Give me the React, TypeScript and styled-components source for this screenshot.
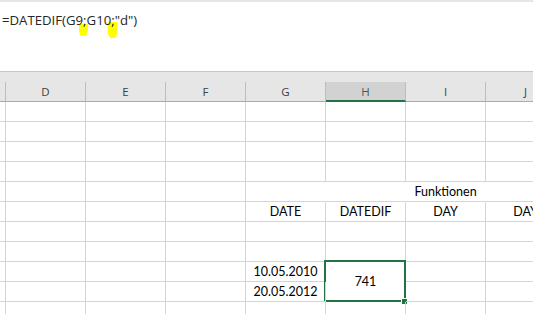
import styled, { createGlobalStyle } from 'styled-components';

type Align = 'left' | 'center' | 'right';

type CellSpec = {
    text?: string;
    align?: Align;
    middle?: boolean;
    noRight?: boolean;
    rowSpan?: number;
    selected?: boolean;
};

const COLUMNS = ['D', 'E', 'F', 'G', 'H', 'I', 'J'];
const SELECTED_COLUMN = 'H';

const empty = (): CellSpec[] => COLUMNS.map(() => ({}));

// one entry per visible sheet row, cells D..J (the stub column is added when rendering)
const ROWS: CellSpec[][] = [
    empty(),
    empty(),
    empty(),
    empty(),
    [{}, {}, {}, { noRight: true }, { noRight: true }, { text: 'Funktionen', noRight: true }, {}],
    [{}, {}, {}, { text: 'DATE' }, { text: 'DATEDIF' }, { text: 'DAY' }, { text: 'DAY' }],
    empty(),
    empty(),
    [{}, {}, {}, { text: '10.05.2010' }, { text: '741', middle: true, rowSpan: 2, selected: true }, {}, {}],
    [{}, {}, {}, { text: '20.05.2012' }, {}, {}],
    empty(),
];

const App = () => {
    return (
        <>
            <GlobalStyle />
            <Window>
                <FormulaBar>
                    <Marks viewBox="0 0 140 45" width="140" height="45">
                        <polygon points="79,24 88,24 88,31 86,36 80.5,36 79,31" />
                        <polygon points="107.5,22 117.5,22 117.5,33 115.5,38 110,38 107.5,33" />
                    </Marks>
                    <FormulaText>=DATEDIF(G9;G10;"d")</FormulaText>
                </FormulaBar>
                <HeaderBand>
                    <HeaderGrid>
                        <HeaderCell />
                        {COLUMNS.map((col) => (
                            <HeaderCell key={col} $selected={col === SELECTED_COLUMN}>
                                {col}
                            </HeaderCell>
                        ))}
                    </HeaderGrid>
                </HeaderBand>
                <Sheet>
                    {ROWS.map((row, r) => [
                        <Cell key={`s${r}`} />,
                        ...row.map((cell, c) => (
                            <Cell
                                key={`${r}-${c}`}
                                $align={cell.align ?? 'center'}
                                $middle={!!cell.middle}
                                $noRight={!!cell.noRight}
                                $rowSpan={cell.rowSpan ?? 1}
                            >
                                {cell.text}
                                {cell.selected && (
                                    <>
                                        <SelectionFrame />
                                        <FillHandle />
                                    </>
                                )}
                            </Cell>
                        )),
                    ])}
                </Sheet>
            </Window>
        </>
    );
};

const GlobalStyle = createGlobalStyle`
    html, body {
        margin: 0;
        padding: 0;
        background: #ffffff;
    }
`;

const Window = styled.div`
    display: flex;
    flex-direction: column;
    width: 533px;
    height: 314px;
    overflow: hidden;
    background: #ffffff;
`;

const FormulaBar = styled.div`
    position: relative;
    flex: none;
    height: 69px;
    border-top: 2px solid #e6e6e6;
    border-bottom: 1px solid #c6c6c6;
`;

const Marks = styled.svg`
    position: absolute;
    top: -2px;
    left: 0;
    fill: #ffff00;
    pointer-events: none;
`;

const FormulaText = styled.div`
    position: relative;
    padding: 9px 0 0 2px;
    font-family: 'Open Sans', 'Noto Sans', sans-serif;
    font-size: 13.2px;
    line-height: 18px;
    color: #262626;
    white-space: nowrap;
`;

const HeaderBand = styled.div`
    flex: none;
    display: flex;
    flex-direction: column;
    justify-content: flex-end;
    height: 30px;
    background: #e6e6e6;
`;

const HeaderGrid = styled.div`
    display: grid;
    grid-template-columns: 6px repeat(7, 80px);
    height: 20px;
`;

const HeaderCell = styled.div<{ $selected?: boolean }>`
    display: flex;
    align-items: center;
    justify-content: center;
    box-sizing: border-box;
    border-right: 1px solid #bdbdbd;
    border-bottom: ${(p) => (p.$selected ? '2px solid #217346' : '1px solid #ababab')};
    background: ${(p) => (p.$selected ? '#d2d2d2' : 'transparent')};
    font-family: 'Open Sans', 'Noto Sans', sans-serif;
    font-size: 11.5px;
    color: ${(p) => (p.$selected ? '#3f5f50' : '#404040')};
`;

const Sheet = styled.div`
    display: grid;
    grid-template-columns: 6px repeat(7, 80px);
    grid-auto-rows: 20px;
`;

const Cell = styled.div<{ $align?: Align; $middle?: boolean; $noRight?: boolean; $rowSpan?: number }>`
    position: relative;
    display: flex;
    justify-content: ${(p) => (p.$align === 'left' ? 'flex-start' : p.$align === 'right' ? 'flex-end' : 'center')};
    align-items: ${(p) => (p.$middle ? 'center' : 'flex-end')};
    grid-row: span ${(p) => p.$rowSpan ?? 1};
    box-sizing: border-box;
    padding-bottom: ${(p) => (p.$middle ? '0' : '2px')};
    border-right: 1px solid ${(p) => (p.$noRight ? 'transparent' : '#d4d4d4')};
    border-bottom: 1px solid #d4d4d4;
    font-family: Lato, 'Open Sans', sans-serif;
    font-size: 12.5px;
    color: #000000;
    white-space: nowrap;
`;

const SelectionFrame = styled.span`
    position: absolute;
    top: -2px;
    left: -2px;
    right: -1px;
    bottom: -1px;
    border: 2px solid #217346;
    pointer-events: none;
`;

const FillHandle = styled.span`
    position: absolute;
    right: -2px;
    bottom: -3px;
    width: 5px;
    height: 5px;
    background: #217346;
    box-shadow: 0 0 0 1px #ffffff;
`;

export default App;
